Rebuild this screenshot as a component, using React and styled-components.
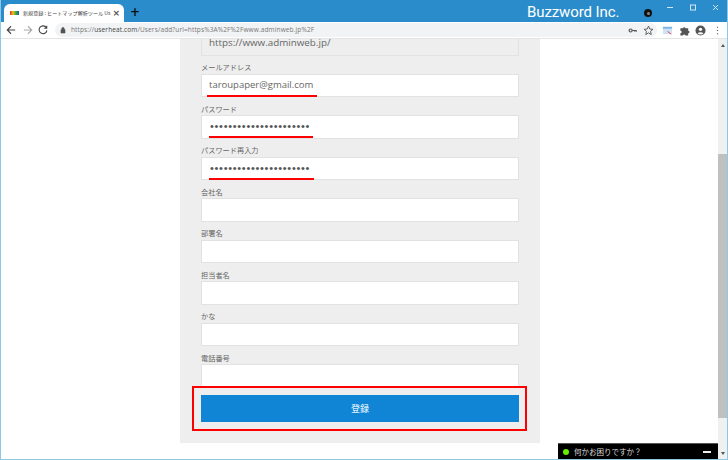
import React from 'react';
import styled, { createGlobalStyle } from 'styled-components';

const Global = createGlobalStyle`
  html, body { margin: 0; padding: 0; width: 728px; height: 460px; overflow: hidden; background: #fff; }
  * { box-sizing: border-box; }
`;
const Win = styled.div`
  width: 728px; height: 460px; display: flex; flex-direction: column;
  border: solid #8ec8e4; border-width: 0 1px 1px 1px; position: relative; overflow: hidden;
  font-family: "Noto Sans CJK JP", "Open Sans", sans-serif;
`;
const TitleBar = styled.div`
  height: 22px; flex: none; background: #2a8ccb; display: flex; align-items: flex-end; position: relative; margin: 0 -1px;
  padding-left: 4px;
`;
const Tab = styled.div`
  width: 120px; height: 18px; background: #fff; border-radius: 6px 6px 0 0; display: flex; align-items: center;
  padding: 0 4px 0 6px; gap: 4px; flex: none;
`;
const Favicon = styled.span`
  width: 9px; height: 4px; flex: none; background: linear-gradient(90deg,#e03020,#f0c020,#30b030,#2050c0);
`;
const TabTitle = styled.span`
  font-size: 5.1px; color: #444; white-space: nowrap; flex: 1; min-width: 0; line-height: 10px;
`;
const TabClose = styled.span`
  font-size: 9px; color: #555; line-height: 10px; font-family: "DejaVu Sans", sans-serif; font-weight: 700;
`;
const NewTab = styled.span`
  color: #111; font-size: 12px; font-weight: 700; line-height: 13px; margin: 0 0 3px 6px; font-family: "DejaVu Sans", sans-serif;
`;
const Brand = styled.span`
  position: absolute; left: 527px; top: 1px; color: #fff; font: 400 15px/22px Roboto, sans-serif; white-space: nowrap; letter-spacing: -0.1px;
`;
const BlackDot = styled.span`
  position: absolute; left: 644px; top: 9px; width: 8px; height: 8px; border-radius: 50%; background: #111;
  &::after { content: ""; position: absolute; left: 2.5px; top: 2.5px; width: 3px; height: 3px; border-radius: 50%; background: #888; }
`;
const WinButtons = styled.div`
  position: absolute; right: 0; top: 0; height: 14px; display: flex;
`;
const WinBtn = styled.svg`
  width: 23px; height: 14px; display: block;
`;
const ToolBar = styled.div`
  height: 17px; flex: none; background: #fff; display: flex; align-items: center; padding: 0 4px 0 5px; border-bottom: 1px solid #e4e4e4;
`;
const NavIcon = styled.svg`
  width: 10px; height: 10px; flex: none; margin-right: ${p => p.$mr}px; display: block;
`;
const Omni = styled.div`
  flex: 1; height: 14px; background: #f1f3f4; border-radius: 7px; display: flex; align-items: center; padding: 0 3.5px 0 4px; gap: 4px;
`;
const Url = styled.span`
  flex: 1; font: 6.5px/14px "Open Sans", sans-serif; color: #777; white-space: nowrap; letter-spacing: 0.02em;
  b { color: #444; font-weight: 400; }
`;
const RightIcon = styled.svg`
  width: ${p => p.$s ?? 11}px; height: ${p => p.$s ?? 11}px; flex: none; display: block; margin-left: ${p => p.$ml ?? 5.7}px;
`;
const Body = styled.div`
  flex: 1; min-height: 0; display: flex; position: relative;
`;
const Main = styled.main`
  flex: 1; min-width: 0; overflow: hidden; display: flex; flex-direction: column; justify-content: flex-end; align-items: flex-start;
  padding: 0 0 16px 179px;
`;
const Panel = styled.form`
  width: 360px; flex: none; background: #eee; padding: 0 21px 21px; display: flex; flex-direction: column;
`;
const Field = styled.label`
  display: block; position: relative;
`;
const LabelText = styled.span`
  display: block; height: 18px; font-size: 7.2px; line-height: 16px; color: #666; white-space: nowrap; padding-top: 3.5px;
`;
const Input = styled.input`
  display: block; width: 318px; height: 23.5px; border: 1.5px solid #e2e2e2; background: ${p => (p.$locked ? '#eee' : '#fff')};
  padding: 0 7px 2px; margin: 0; outline: none; color: #666; border-radius: 0;
  font: ${p => (p.$locked ? 9.8 : 9.5)}px "Open Sans", sans-serif;
  &[type=password] { color: #555; font: 11px "Liberation Sans", sans-serif; letter-spacing: 0.7px; padding: 0 7px 1px 8px; }
`;
const Underline = styled.span`
  position: absolute; left: ${p => p.$l}px; top: ${p => p.$t}px; width: ${p => p.$w}px; height: 2px; background: #f00;
`;
const Submit = styled.button`
  display: block; width: 318px; height: 27px; margin-top: 7.5px; border: 0; border-radius: 0; background: #1085d6; color: #d6ebf8;
  font: 500 9px "Noto Sans CJK JP", sans-serif; padding: 0;
`;
const SubmitWrap = styled.div`
  position: relative;
`;
const RedBox = styled.span`
  position: absolute; left: -9px; right: -8px; top: -1.5px; bottom: -9px; border: 2px solid #f00; pointer-events: none;
`;
const Scroll = styled.div`
  width: 9px; flex: none; background: #f0f0f0; position: relative; display: flex; flex-direction: column; justify-content: space-between;
`;
const Arrow = styled.span`
  height: 12px; flex: none; display: flex; align-items: center; justify-content: center;
  &::before { content: ""; border: 2px solid transparent; ${p => (p.$up ? 'border-bottom: 3px solid #555; margin-bottom: 2px;' : 'border-top: 3px solid #555; margin-top: 2px;')} }
`;
const Thumb = styled.div`
  position: absolute; left: 0; right: 0; top: 115px; bottom: 41px; background: #c0c0c0;
`;
const Chat = styled.div`
  position: absolute; right: 9px; bottom: 0; width: 160px; height: 16px; background: #000; border-top: 1px solid #555;
  display: flex; align-items: center; padding: 0 7px 0 5px; gap: 5px; color: #ddd; font-size: 7.5px;
`;
const Green = styled.span`
  width: 6px; height: 6px; border-radius: 50%; background: #66f000; flex: none;
`;
const ChatText = styled.span`
  flex: 1; white-space: nowrap;
`;
const Minus = styled.span`
  width: 8px; height: 2px; background: #eee; flex: none;
`;

const F = ({ label, value, type = 'text', u }) => (
  <Field>
    <LabelText>{label}</LabelText>
    <Input type={type} readOnly value={value || ''} />
    {u && <Underline $l={u[0]} $t={u[1]} $w={u[2]} />}
  </Field>
);

export default function App() {
  return (
    <Win>
      <Global />
      <TitleBar>
        <Tab>
          <Favicon />
          <TabTitle>新規登録 : ヒートマップ解析ツール Us</TabTitle>
          <TabClose>×</TabClose>
        </Tab>
        <NewTab>+</NewTab>
        <Brand>Buzzword Inc.</Brand>
        <BlackDot />
        <WinButtons>
          <WinBtn viewBox="0 0 23 14"><path d="M8 7.5h6" stroke="#cfe6f5" fill="none" /></WinBtn>
          <WinBtn viewBox="0 0 23 14"><rect x="8.5" y="5" width="5" height="5" stroke="#cfe6f5" fill="none" /></WinBtn>
          <WinBtn viewBox="0 0 23 14"><path d="M8 5l5 5M13 5l-5 5" stroke="#cfe6f5" fill="none" /></WinBtn>
        </WinButtons>
      </TitleBar>
      <ToolBar>
        <NavIcon $mr={7} viewBox="0 0 12 12"><path d="M11 6H1.5M6 1.5L1.5 6 6 10.5" fill="none" stroke="#444" strokeWidth="1.3" /></NavIcon>
        <NavIcon $mr={5} viewBox="0 0 12 12"><path d="M1 6h9.5M6 1.5L10.5 6 6 10.5" fill="none" stroke="#aaa" strokeWidth="1.3" /></NavIcon>
        <NavIcon $mr={7} viewBox="0 0 12 12"><path d="M10 3.2A4.7 4.7 0 1 0 10.7 6.5M10.5 .8v3h-3" fill="none" stroke="#444" strokeWidth="1.3" /></NavIcon>
        <Omni>
          <RightIcon $ml={0} $s={8} viewBox="0 0 12 12"><path d="M3 5.5h6v5H3zM4.2 5.5V4a1.8 1.8 0 0 1 3.6 0v1.5" fill="#555" stroke="#555" /></RightIcon>
          <Url>https://<b>userheat.com</b>/Users/add?url=https%3A%2F%2Fwww.adminweb.jp%2F</Url>
          <RightIcon $s={9} viewBox="0 0 12 12"><circle cx="3.5" cy="6" r="2" fill="none" stroke="#555" strokeWidth="1.6" /><path d="M5.5 6h5.5v1.5M9 6v1.5" fill="none" stroke="#555" strokeWidth="1.4" /></RightIcon>
          <RightIcon $ml={2} viewBox="0 0 12 12"><path d="M6 1.2l1.4 3.2 3.4.3-2.6 2.3.8 3.4L6 8.6 3 10.4l.8-3.4-2.6-2.3 3.4-.3z" fill="none" stroke="#555" /></RightIcon>
        </Omni>
        <RightIcon $ml={4.9} viewBox="0 0 12 12"><rect x="1" y="2" width="10" height="8" fill="#cfe3f5" /><rect x="1" y="2" width="10" height="2" fill="#7db4e6" /><path d="M6 7l4 3" stroke="#e33" /></RightIcon>
        <RightIcon viewBox="0 0 12 12"><path d="M1.5 3.5h2.8a1.4 1.4 0 0 1 2.7 0H10v2.7a1.4 1.4 0 0 1 0 2.8V11.5H7a1.4 1.4 0 0 0-2.7 0H1.5V9a1.4 1.4 0 0 0 0-2.8z" fill="#555" /></RightIcon>
        <RightIcon viewBox="0 0 12 12"><circle cx="6" cy="6" r="5.5" fill="#555" /><circle cx="6" cy="4.7" r="1.8" fill="#fff" /><path d="M2.8 9a4 3 0 0 1 6.4 0 4.4 4.4 0 0 1-6.4 0z" fill="#fff" /></RightIcon>
        <RightIcon viewBox="0 0 12 12"><path d="M6 2v1M6 5.5v1M6 9v1" stroke="#555" strokeWidth="1.3" /></RightIcon>
      </ToolBar>
      <Body>
        <Main>
          <Panel>
            <Input $locked readOnly value="https://www.adminweb.jp/" />
            <F label="メールアドレス" value="taroupaper@gmail.com" u={[6, 39, 110]} />
            <F label="パスワード" type="password" value="abcdefghijklmnopqrstuv" u={[8, 38.5, 104]} />
            <F label="パスワード再入力" type="password" value="abcdefghijklmnopqrstuv" u={[8, 39, 105]} />
            <F label="会社名" />
            <F label="部署名" />
            <F label="担当者名" />
            <F label="かな" />
            <F label="電話番号" />
            <SubmitWrap>
              <Submit type="button">登録</Submit>
              <RedBox />
            </SubmitWrap>
          </Panel>
        </Main>
        <Scroll>
          <Arrow $up />
          <Thumb />
          <Arrow />
        </Scroll>
        <Chat>
          <Green />
          <ChatText>何かお困りですか？</ChatText>
          <Minus />
        </Chat>
      </Body>
    </Win>
  );
}
